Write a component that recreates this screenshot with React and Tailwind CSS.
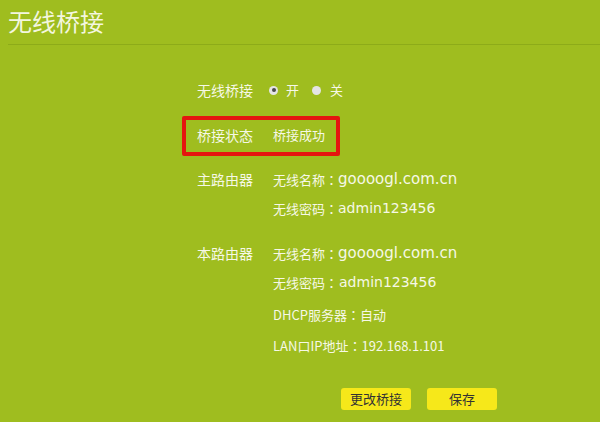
export default function App() {
  const cjk = { fontFamily: '"Noto Sans CJK SC", "Microsoft YaHei", sans-serif' };
  const lat = { fontFamily: '"DejaVu Sans", Verdana, sans-serif' };
  const colon = { fontFamily: '"Noto Sans CJK JP", sans-serif' };
  const C = () => <span style={colon}>：</span>;
  return (
    <div className="w-[600px] h-[422px] bg-[#9fbd1f] text-[#f6f8e6] overflow-hidden relative" style={cjk}>
      <div className="ml-[8px] h-[45px] border-b border-[#8dab19] flex items-start">
        <div className="text-[24px] leading-[36px] mt-[3px] text-[#f3f6df]">无线桥接</div>
      </div>
      <div className="ml-[197px] mt-[33px] flex flex-col text-[14px]">
        <div className="h-[24px] flex items-center">
          <div className="w-[76px]">无线桥接</div>
          <div className="flex items-center -ml-[4px] text-[13px]">
            <span className="w-[9px] h-[9px] rounded-full bg-[#e4e4e4] flex items-center justify-center">
              <span className="w-[4px] h-[4px] rounded-full bg-[#4a4a4a]" />
            </span>
            <span className="ml-[8px]">开</span>
            <span className="ml-[13px] w-[9px] h-[9px] rounded-full bg-[#e4e4e4]" />
            <span className="ml-[9px]">关</span>
          </div>
        </div>
        <div className="h-[24px] mt-[21px] flex items-center relative">
          <div className="absolute -left-[15px] -top-[7px] w-[158px] h-[40px] border-[4px] border-[#e5160f] rounded-[2px]" />
          <div className="w-[76px]">桥接状态</div>
          <div className="text-[13px]">桥接成功</div>
        </div>
        <div className="mt-[18px] flex">
          <div className="w-[76px] h-[29px] flex items-center">主路由器</div>
          <div className="flex flex-col">
            <div className="h-[29px] flex items-center">
              <span className="text-[13px]">无线名称<C /></span>
              <span className="text-[15px]" style={lat}>goooogl.com.cn</span>
            </div>
            <div className="h-[29px] flex items-center">
              <span className="text-[13px]">无线密码<C /></span>
              <span className="text-[14px]" style={lat}>admin123456</span>
            </div>
          </div>
        </div>
        <div className="mt-[16px] flex">
          <div className="w-[76px] h-[29px] flex items-center">本路由器</div>
          <div className="flex flex-col">
            <div className="h-[29px] flex items-center">
              <span className="text-[13px]">无线名称<C /></span>
              <span className="text-[15px]" style={lat}>goooogl.com.cn</span>
            </div>
            <div className="h-[29px] flex items-center">
              <span className="text-[13px]">无线密码<C /></span>
              <span className="text-[14px] ml-[1px]" style={lat}>admin123456</span>
            </div>
            <div className="h-[29px] mt-[3px] flex items-center text-[13px]">DHCP服务器<C />自动</div>
            <div className="h-[29px] mt-[2px] flex items-center text-[13px]">LAN口IP地址<C />192.168.1.101</div>
          </div>
        </div>
      </div>
      <div className="ml-[341px] mt-[28px] flex gap-[16px] text-[13px] text-[#333]">
        <button className="w-[70px] h-[22px] bg-[#f6e81a] rounded-[3px] flex items-center justify-center">更改桥接</button>
        <button className="w-[70px] h-[22px] bg-[#f6e81a] rounded-[3px] flex items-center justify-center">保存</button>
      </div>
    </div>
  );
}
